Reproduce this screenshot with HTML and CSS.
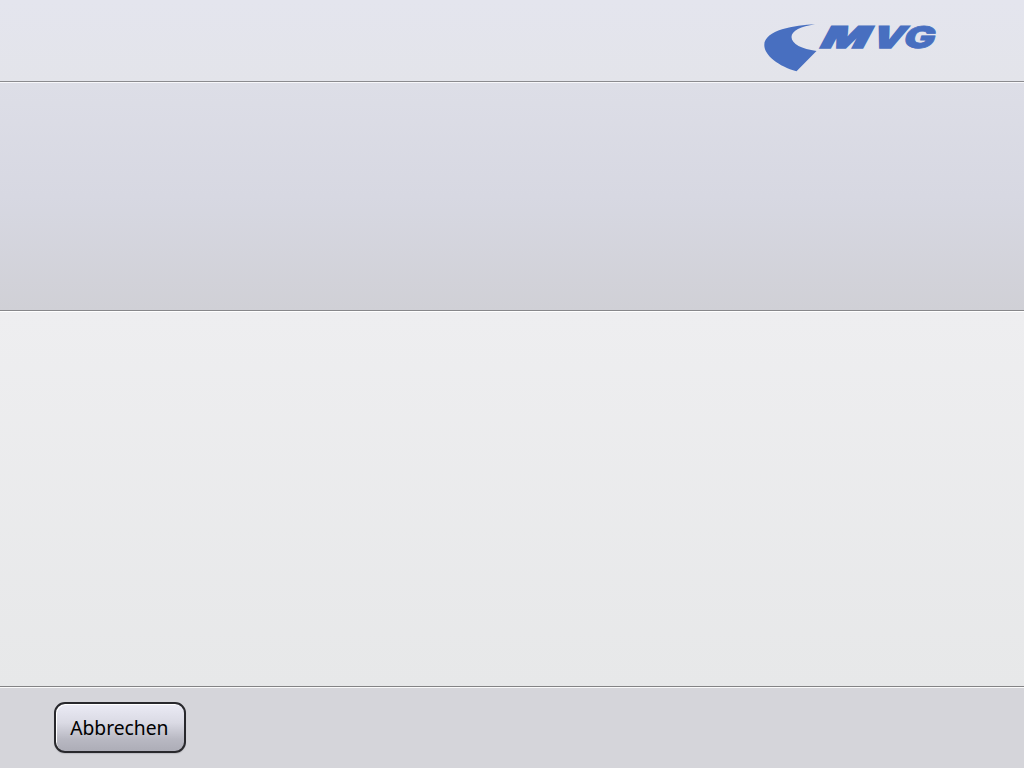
FILE: index.html
```html
<!DOCTYPE html>
<html lang="de">
<head>
<meta charset="utf-8">
<title>MVG</title>
<link rel="stylesheet" href="styles.css">
</head>
<body>
<div class="screen">
  <header class="header">
    <svg class="logo" viewBox="0 0 180 52" aria-label="MVG">
      <path class="logo-mark" d="M55 4.2C35 5 4.300 10 4.300 25C4.300 35.500 19 46.500 36.500 51.200L56.500 31C42 29 31.500 24 31.500 17C31.500 10.500 41 6.500 55 4.200Z"/>
      <text class="logo-text" transform="translate(58 28) skewX(-28)" x="0" y="0" textLength="46.500" lengthAdjust="spacingAndGlyphs">M</text>
      <text class="logo-text" transform="translate(109.500 28) skewX(-23)" x="0" y="0" textLength="31.500" lengthAdjust="spacingAndGlyphs">V</text>
      <text class="logo-text logo-text-fine" transform="translate(142 28) skewX(-14)" x="0" y="0" textLength="31.500" lengthAdjust="spacingAndGlyphs">G</text>
    </svg>
  </header>
  <section class="info"></section>
  <main class="content"></main>
  <footer class="footer">
    <button class="button" type="button"><span class="label">Abbrechen</span></button>
  </footer>
</div>
</body>
</html>
```

FILE: styles.css
```css
* { box-sizing: border-box; }
body { margin: 0; }
.screen {
  width: 1024px;
  height: 768px;
  display: grid;
  grid-template-rows: 82px 229px 376px 81px;
  font-family: "Noto Sans", "Open Sans", sans-serif;
}
.header {
  display: flex;
  justify-content: flex-end;
  padding: 20px 84px 0 0;
  background: linear-gradient(#e4e5ee, #e3e4ea);
  border-bottom: 1px solid #8b8b8f;
}
.logo { width: 180px; height: 52px; overflow: visible; }
.logo-mark, .logo-text { fill: #486fc0; }
.logo-text {
  font: 900 30px Inter, sans-serif;
  stroke: #486fc0;
  stroke-width: 1.5px;
}
.logo-text-fine { stroke-width: 0.7px; }
.info {
  background: linear-gradient(#dddee7, #d7d8e2 50%, #d0d0d6);
  border-top: 1px solid #f8f8fb;
  border-bottom: 1px solid #87878a;
}
.content {
  background: linear-gradient(#eeeef0, #e7e8e9);
  border-top: 1px solid #fff;
  border-bottom: 1px solid #838385;
}
.footer {
  padding: 14px 0 0 54px;
  background: #d5d5da;
  border-top: 1px solid #fafafa;
}
.button {
  display: flex;
  align-items: center;
  justify-content: center;
  width: 132px;
  height: 51px;
  padding: 0;
  border: 2px solid #28282c;
  border-radius: 11px;
  background: linear-gradient(#ebebf5, #dadae4 40%, #b8b8c2 75%, #adadb7);
  box-shadow: inset 1px 1px 0 #fff, 0 1px 1px #bbbbc0;
  color: #000;
  font: 20.500px "Noto Sans", "Open Sans", sans-serif;
}
.label {
  white-space: nowrap;
  transform: translate(-1px, -1px) scaleX(0.94);
}
```
